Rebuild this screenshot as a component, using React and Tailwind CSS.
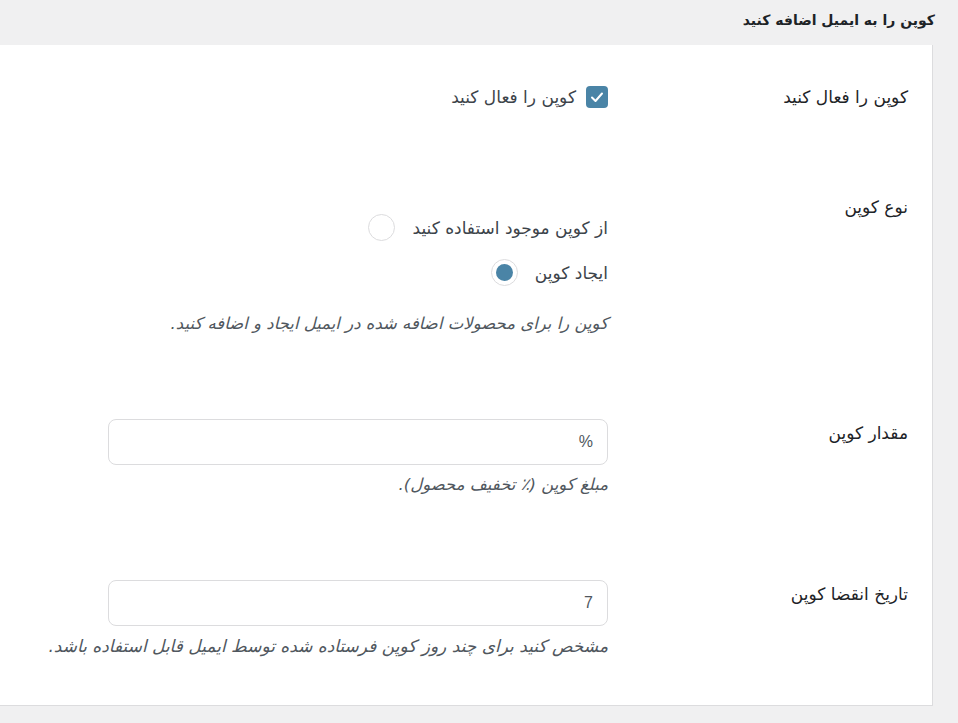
import React from "react";

const fa = { fontFamily: '"DejaVu Sans", "Noto Sans", sans-serif' };

function Label({ children, className = "" }) {
  return (
    <div className={"w-[300px] shrink-0 text-[17px] leading-[20px] text-[#1d2327] " + className}>
      {children}
    </div>
  );
}

function Radio({ checked }) {
  return (
    <span className="w-[27px] h-[27px] rounded-full border border-[#dcdcde] bg-white flex items-center justify-center shrink-0">
      {checked && <span className="w-[17px] h-[17px] rounded-full bg-[#4a84a6]" />}
    </span>
  );
}

export default function App() {
  return (
    <div dir="rtl" style={fa} className="w-[958px] h-[723px] bg-[#f0f0f1] overflow-hidden">
      <div className="h-[45px] pr-[23px] flex items-center">
        <h2 className="text-[14px] font-bold text-[#1d2327] leading-[20px] -mt-[5px]">کوپن را به ایمیل اضافه کنید</h2>
      </div>
      <div className="mr-[25px] bg-white border-r border-b border-[#dcdcde] pr-[24px] pt-[41px] pb-[49px] h-[661px]">
        {/* Row 1 */}
        <div className="flex">
          <Label className="leading-[22px]">کوپن را فعال کنید</Label>
          <div className="flex items-center gap-[10px]">
            <span className="w-[22px] h-[22px] rounded-[4px] bg-[#4a84a6] flex items-center justify-center">
              <svg width="16" height="16" viewBox="0 0 16 16" fill="none">
                <path d="M3 8.5 L6.5 12 L13 4.5" stroke="white" strokeWidth="2" strokeLinecap="round" strokeLinejoin="round" />
              </svg>
            </span>
            <span className="text-[17px] leading-[22px] text-[#3c434a]">کوپن را فعال کنید</span>
          </div>
        </div>

        {/* Row 2 */}
        <div className="flex mt-[89px]">
          <Label>نوع کوپن</Label>
          <div className="pt-[17px] flex flex-col">
            <div className="flex items-center gap-[18px] h-[27px]">
              <span className="text-[17px] leading-[22px] text-[#3c434a]">از کوپن موجود استفاده کنید</span>
              <Radio />
            </div>
            <div className="flex items-center gap-[17px] h-[27px] mt-[18px]">
              <span className="text-[17px] leading-[22px] text-[#3c434a]">ایجاد کوپن</span>
              <Radio checked />
            </div>
            <p className="mt-[28px] text-[16.5px] leading-[20px] italic text-[#50575e] whitespace-nowrap">
              کوپن را برای محصولات اضافه شده در ایمیل ایجاد و اضافه کنید.
            </p>
          </div>
        </div>

        {/* Row 3 */}
        <div className="flex mt-[85px]">
          <Label className="mt-[4px]">مقدار کوپن</Label>
          <div className="flex flex-col">
            <div className="w-[500px] h-[46px] rounded-[8px] border border-[#dcdcde] bg-white flex items-center pr-[14px] text-[16px] text-[#50575e]" style={{ fontFamily: '"Liberation Sans", sans-serif' }}>
              %
            </div>
            <p className="mt-[10px] text-[16.5px] leading-[20px] italic text-[#50575e] whitespace-nowrap">
              مبلغ کوپن (٪ تخفیف محصول).
            </p>
          </div>
        </div>

        {/* Row 4 */}
        <div className="flex mt-[85px]">
          <Label className="mt-[4px]">تاریخ انقضا کوپن</Label>
          <div className="flex flex-col">
            <div className="w-[500px] h-[46px] rounded-[8px] border border-[#dcdcde] bg-white flex items-center pr-[14px] text-[16px] text-[#50575e]" style={{ fontFamily: '"Liberation Sans", sans-serif' }}>
              7
            </div>
            <p className="mt-[10px] text-[17px] leading-[20px] italic text-[#50575e] whitespace-nowrap">
              مشخص کنید برای چند روز کوپن فرستاده شده توسط ایمیل قابل استفاده باشد.
            </p>
          </div>
        </div>
      </div>
    </div>
  );
}
